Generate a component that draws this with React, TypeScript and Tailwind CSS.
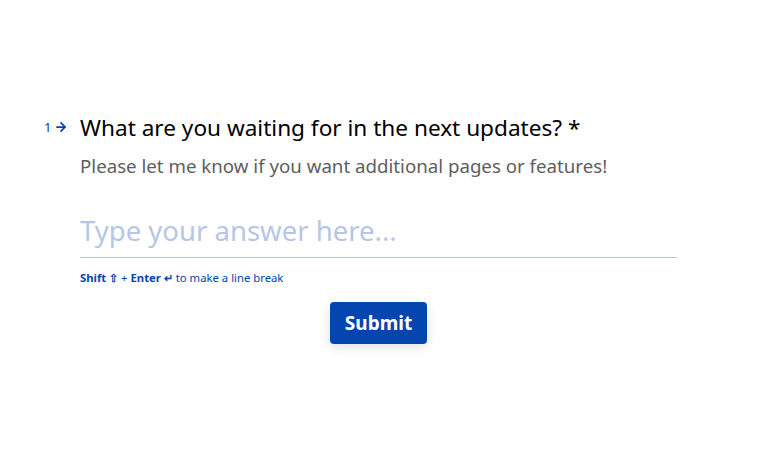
import { ArrowRight } from 'lucide-react';

export default function App() {
  return (
    <div
      className="w-[757px] h-[475px] bg-white flex justify-center"
      style={{ fontFamily: '"Noto Sans", sans-serif' }}
    >
      <div className="w-[597px] pt-[113px] flex flex-col">
        {/* Question */}
        <div className="relative">
          <div className="absolute -left-[36px] top-[7px] flex items-center gap-[3px] text-[#0445af]">
            <span className="text-[13px] leading-none">1</span>
            <ArrowRight size={14} strokeWidth={3} />
          </div>
          <h1 className="text-[22.6px] leading-[30px] text-[#000]">
            What are you waiting for in the next updates? *
          </h1>
          <p className="mt-[10px] text-[18.7px] leading-[26px] text-[#5e5e5e]">
            Please let me know if you want additional pages or features!
          </p>
        </div>

        {/* Answer */}
        <div className="mt-[33px] border-b border-[#b6c3dc] pb-[7px]">
          <span className="text-[27.5px] leading-[38px] text-[#b7c6e6]">Type your answer here...</span>
        </div>
        <div className="mt-[12px] text-[11.3px] text-[#0445af] leading-4">
          <span className="font-bold">Shift ⇧</span> + <span className="font-bold">Enter ↵</span> to make a line break
        </div>

        <div className="flex justify-center mt-[16px]">
          <button className="h-[42px] px-[15px] rounded bg-[#0445af] text-white font-bold text-[19px] shadow-[0_3px_12px_rgba(0,0,0,0.12)]">
            Submit
          </button>
        </div>
      </div>
    </div>
  );
}
